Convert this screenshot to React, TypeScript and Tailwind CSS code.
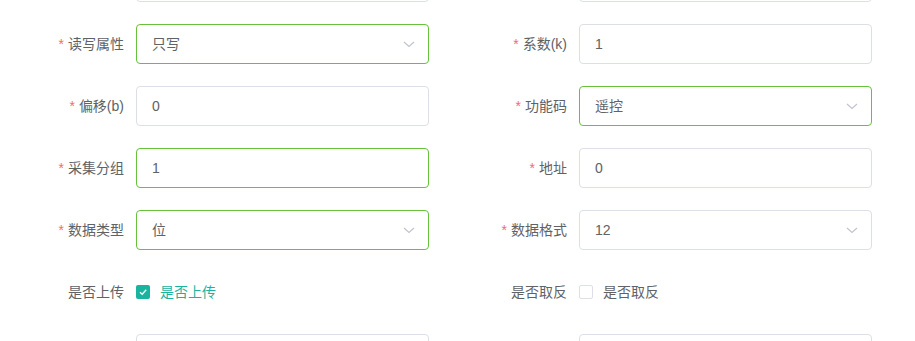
import React from "react";

const Chevron = () => (
  <svg width="14" height="14" viewBox="0 0 14 14" className="absolute right-[12px] top-1/2 -translate-y-1/2">
    <path d="M2 5 L7 9.5 L12 5" fill="none" stroke="#c0c4cc" strokeWidth="1.2" />
  </svg>
);

type Field = { label: string; value?: string; required?: boolean; select?: boolean; green?: boolean };

const Input = ({ f }: { f: Field }) => (
  <div
    className={`relative h-[40px] w-[293px] rounded-[4px] border bg-white pl-[15px] flex items-center text-[14px] text-[#606266] ${
      f.green ? "border-[#67c23a]" : "border-[#dcdfe6]"
    }`}
  >
    {f.value}
    {f.select && <Chevron />}
  </div>
);

const Row = ({ f }: { f: Field }) => (
  <div className="flex items-center w-[443px]">
    <div className="w-[136px] pr-[12px] text-right text-[14px] text-[#606266] leading-[40px]">
      {f.required && <span className="text-[#f56c6c] mr-[4px]">*</span>}
      {f.label}
    </div>
    <Input f={f} />
  </div>
);

const rows: [Field, Field][] = [
  [
    { label: "读写属性", value: "只写", required: true, select: true, green: true },
    { label: "系数(k)", value: "1", required: true },
  ],
  [
    { label: "偏移(b)", value: "0", required: true },
    { label: "功能码", value: "遥控", required: true, select: true, green: true },
  ],
  [
    { label: "采集分组", value: "1", required: true, green: true },
    { label: "地址", value: "0", required: true },
  ],
  [
    { label: "数据类型", value: "位", required: true, select: true, green: true },
    { label: "数据格式", value: "12", required: true, select: true },
  ],
];

const Check = ({ label, checked }: { label: string; checked: boolean }) => (
  <div className="flex items-center w-[443px] h-[40px]">
    <div className="w-[136px] pr-[12px] text-right text-[14px] text-[#606266]">{label}</div>
    <div className="flex items-center gap-[10px]">
      {checked ? (
        <div className="w-[14px] h-[14px] rounded-[2px] bg-[#1ab3a0] flex items-center justify-center">
          <svg width="10" height="10" viewBox="0 0 10 10">
            <path d="M2 5.2 L4.2 7.3 L8.2 2.8" fill="none" stroke="white" strokeWidth="1.3" />
          </svg>
        </div>
      ) : (
        <div className="w-[14px] h-[14px] rounded-[2px] border border-[#dcdfe6] bg-white" />
      )}
      <span className={`text-[14px] ${checked ? "text-[#1ab3a0]" : "text-[#606266]"}`}>{label}</span>
    </div>
  </div>
);

export default function App() {
  return (
    <div
      className="w-[915px] h-[341px] overflow-hidden bg-white"
      style={{ fontFamily: '"Liberation Sans", "Noto Sans CJK SC", sans-serif' }}
    >
      <div className="-mt-[38px] flex flex-col gap-[22px]">
        <div className="flex">
          <div className="w-[443px] flex"><div className="w-[136px]" /><Input f={{ label: "" }} /></div>
          <div className="w-[443px] flex"><div className="w-[136px]" /><Input f={{ label: "" }} /></div>
        </div>
        {rows.map((r, i) => (
          <div key={i} className="flex">
            <Row f={r[0]} />
            <Row f={r[1]} />
          </div>
        ))}
        <div className="flex">
          <Check label="是否上传" checked />
          <Check label="是否取反" checked={false} />
        </div>
        <div className="flex">
          <div className="w-[443px] flex"><div className="w-[136px]" /><Input f={{ label: "" }} /></div>
          <div className="w-[443px] flex"><div className="w-[136px]" /><Input f={{ label: "" }} /></div>
        </div>
      </div>
    </div>
  );
}
